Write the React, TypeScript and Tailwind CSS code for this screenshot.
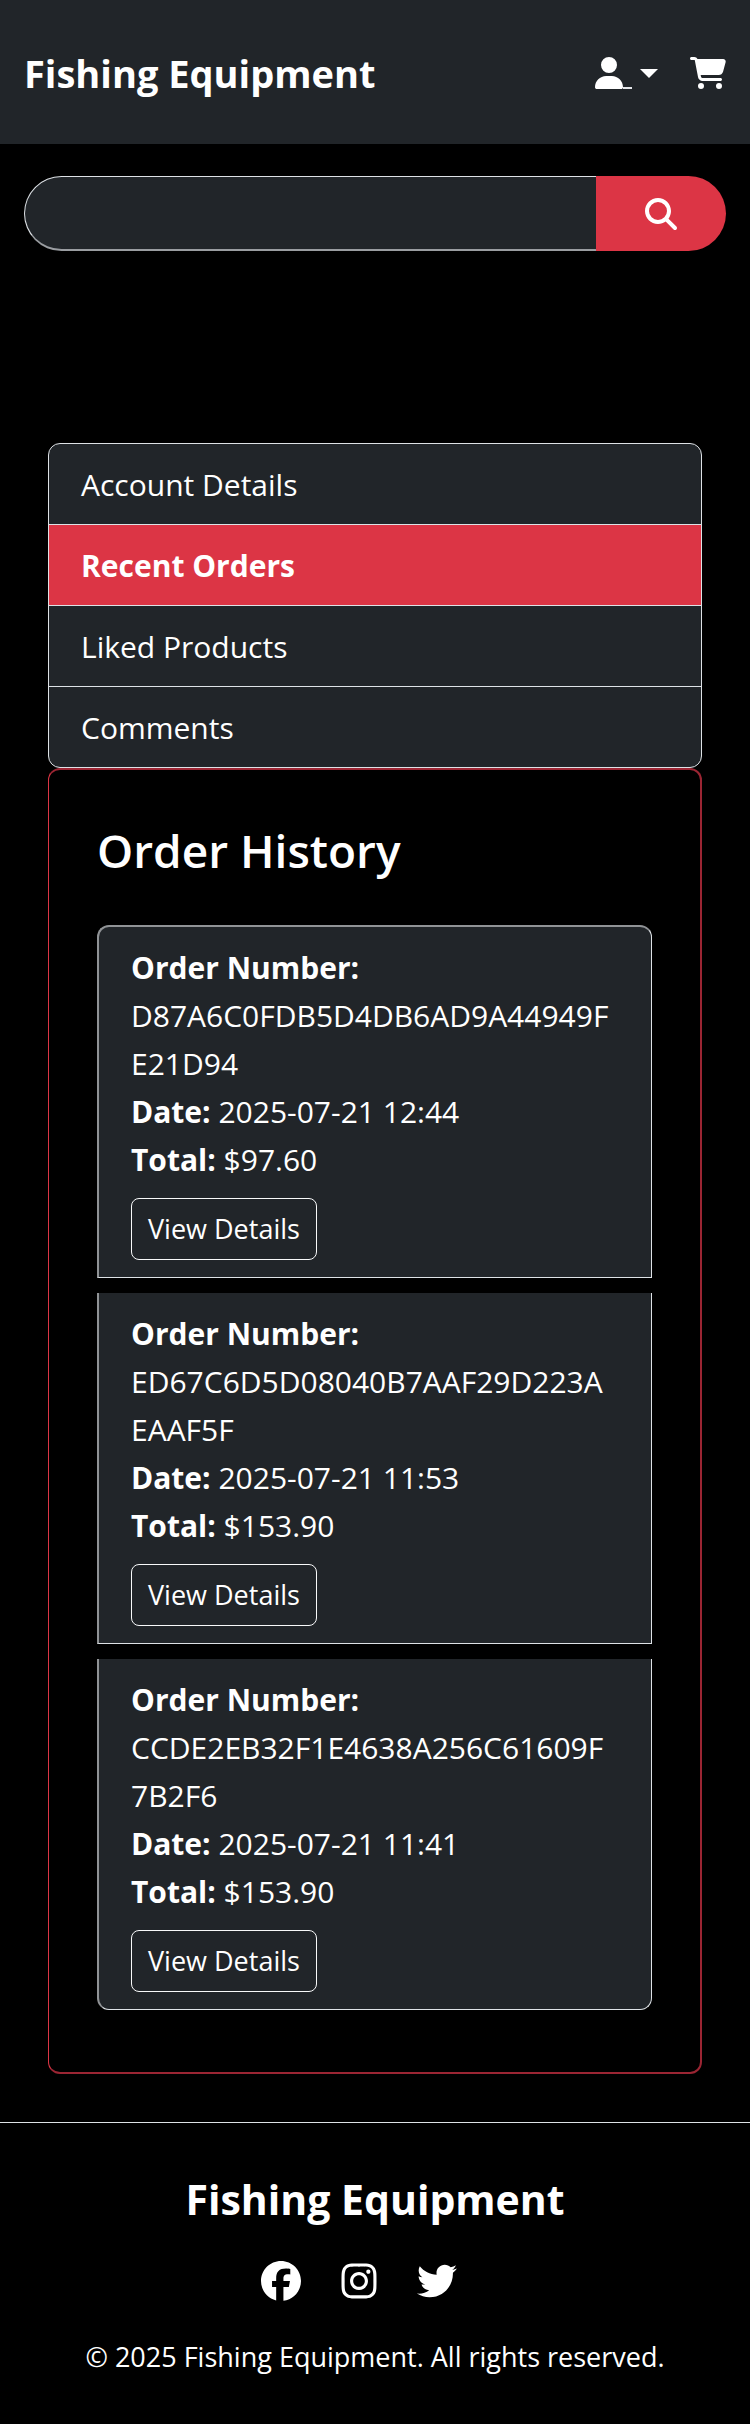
import {
  FaCartShopping,
  FaFacebook,
  FaInstagram,
  FaMagnifyingGlass,
  FaTwitter,
  FaUser,
} from "react-icons/fa6";

type Order = { id: string; date: string; total: string };

const orders: Order[] = [
  { id: "D87A6C0FDB5D4DB6AD9A44949FE21D94", date: "2025-07-21 12:44", total: "$97.60" },
  { id: "ED67C6D5D08040B7AAF29D223AEAAF5F", date: "2025-07-21 11:53", total: "$153.90" },
  { id: "CCDE2EB32F1E4638A256C61609F7B2F6", date: "2025-07-21 11:41", total: "$153.90" },
];

const tabs = ["Account Details", "Recent Orders", "Liked Products", "Comments"];

function Header() {
  return (
    <header className="flex h-36 items-center justify-between bg-[#212529] px-6">
      <a href="#home" className="pt-0.5 text-[38px] leading-[60px] font-bold">
        Fishing Equipment
      </a>
      <nav className="flex items-center gap-8 pt-0.5">
        <button type="button" aria-label="Account menu" className="flex items-center gap-2">
          <span className="flex items-end">
            <FaUser className="h-8 w-7" />
            <span className="h-0.5 w-[9px] bg-gray-200" />
          </span>
          <span className="border-x-[9px] border-t-[9px] border-x-transparent border-t-white" />
        </button>
        <a href="#cart" aria-label="Shopping cart">
          <FaCartShopping className="h-8 w-9" />
        </a>
      </nav>
    </header>
  );
}

function SearchBar() {
  return (
    <form role="search" className="flex h-[75px]" onSubmit={(e) => e.preventDefault()}>
      <input
        type="search"
        aria-label="Search products"
        className="min-w-0 flex-1 rounded-l-full border border-r-0 border-b-2 border-[#dee2e6] border-b-[#9a9da1] bg-[#212529] px-6 outline-none"
      />
      <button
        type="submit"
        aria-label="Search"
        className="flex w-[130px] items-center justify-center rounded-r-full bg-[#dc3545]"
      >
        <FaMagnifyingGlass className="size-8" />
      </button>
    </form>
  );
}

function AccountTabs() {
  return (
    <nav className="divide-y divide-[#dee2e6] overflow-hidden rounded-xl border border-[#dee2e6] bg-[#212529]">
      {tabs.map((tab) => {
        const active = tab === "Recent Orders";
        return (
          <a
            key={tab}
            href="#account"
            aria-current={active ? "page" : undefined}
            className={
              active
                ? "block bg-[#dc3545] px-8 pt-[17px] pb-[15px] font-bold"
                : "block px-8 pt-[17px] pb-[15px]"
            }
          >
            {tab}
          </a>
        );
      })}
    </nav>
  );
}

function OrderCard({ order }: { order: Order }) {
  return (
    <li className="border-r border-b border-l-2 border-[#dee2e6] border-l-[#909396] bg-[#212529] px-8 py-[17px] first:rounded-t-xl first:border-t-2 first:border-t-[#909396] last:rounded-b-xl">
      <p className="wrap-break-word">
        <strong>Order Number:</strong> {order.id}
      </p>
      <p>
        <strong>Date:</strong> {order.date}
      </p>
      <p>
        <strong>Total:</strong> {order.total}
      </p>
      <button
        type="button"
        className="mt-[14px] block rounded-lg border border-[#f8f9fa] px-4 py-2 text-[27px] leading-[44px]"
      >
        View Details
      </button>
    </li>
  );
}

function Footer() {
  return (
    <footer className="mt-12 border-t border-[#dee2e6] pt-[46px] pb-11 text-center">
      <h2 className="text-[41px] leading-[60px] font-bold">Fishing Equipment</h2>
      <div className="mt-8 flex items-center justify-center gap-10 pr-8">
        <a href="#facebook" aria-label="Facebook">
          <FaFacebook className="size-10" />
        </a>
        <a href="#instagram" aria-label="Instagram">
          <FaInstagram className="h-10 w-9" />
        </a>
        <a href="#twitter" aria-label="Twitter">
          <FaTwitter className="size-10" />
        </a>
      </div>
      <p className="mt-9 text-[27px] leading-[40px]">
        © 2025 Fishing Equipment. All rights reserved.
      </p>
    </footer>
  );
}

export default function App() {
  return (
    <div className="min-h-screen bg-black font-['Open_Sans','Noto_Sans',sans-serif] text-[30px] leading-[48px] text-white">
      <Header />
      <div className="px-6 pt-8">
        <SearchBar />
      </div>
      <main className="mt-48 px-12">
        <AccountTabs />
        <section className="rounded-xl border border-y-2 border-r-2 border-[#dc3545] border-y-[#9b2533] border-r-[#9b2533] px-12 pt-[50px] pb-[62px]">
          <h1 className="text-[46px] leading-[60px] font-semibold">Order History</h1>
          <ul className="mt-[45px] flex flex-col gap-[15px]">
            {orders.map((order) => (
              <OrderCard key={order.id} order={order} />
            ))}
          </ul>
        </section>
      </main>
      <Footer />
    </div>
  );
}
